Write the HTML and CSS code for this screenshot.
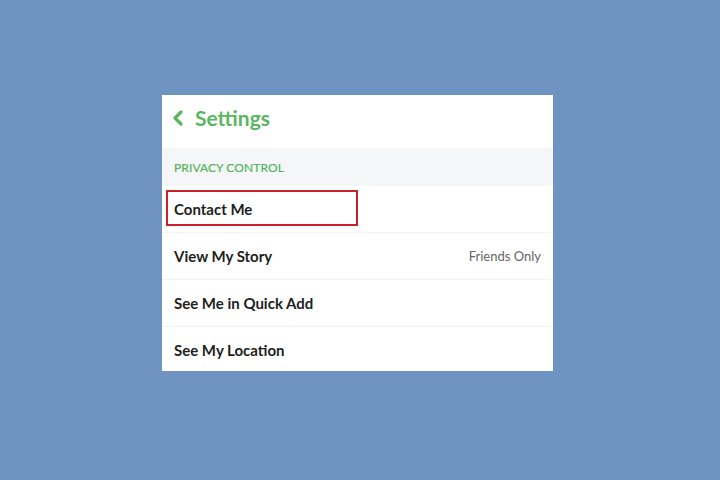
FILE: index.html
```html
<!DOCTYPE html>
<html>
<head>
    <title>Settings - Privacy Control</title>
    <meta name="viewport" content="width=device-width, initial-scale=1.0">
    <link rel="stylesheet" href="styles.css">
</head>
<body>
    <div class="panel">
        <header class="panel-header">
            <svg class="back" width="12" height="16" viewBox="0 0 12 16">
                <path d="M9 2 L3 8 L9 14" fill="none" stroke="#5bb662" stroke-width="3.2" stroke-linecap="round" stroke-linejoin="round"/>
            </svg>
            <h1>Settings</h1>
        </header>

        <div class="section-title">PRIVACY CONTROL</div>

        <ul class="rows">
            <li class="row highlight">Contact Me</li>
            <li class="row">View My Story <span class="value">Friends Only</span></li>
            <li class="row">See Me in Quick Add</li>
            <li class="row">See My Location</li>
        </ul>
    </div>
</body>
</html>
```

FILE: styles.css
```css
body {
    background-color: #7094c1; /* Blue backdrop */
    font-family: Lato, "Open Sans", sans-serif;
    margin: 0;
    padding: 95px 0 0 162px;
}

.panel {
    width: 391px;
    height: 276px;
    background-color: #ffffff;
    overflow: hidden;
}

.panel-header {
    height: 53px;
    display: flex;
    align-items: center;
    padding-left: 10px;
    padding-bottom: 8px;
    box-sizing: border-box;
    gap: 11px;
}

.back {
    margin-top: 1px;
}

.panel-header h1 {
    margin: 0;
    font-size: 21px;
    font-weight: 700;
    color: #5bb662; /* Green title */
}

.section-title {
    height: 38px;
    background-color: #f5f6f8;
    color: #56b45e;
    font-size: 12px;
    letter-spacing: 0.1px;
    -webkit-text-stroke: 0.2px #56b45e;
    display: flex;
    align-items: center;
    padding-left: 12px;
}

.rows {
    list-style: none;
    margin: 0;
    padding: 0;
}

.row {
    position: relative;
    height: 47px;
    box-sizing: border-box;
    display: flex;
    align-items: center;
    justify-content: space-between;
    padding: 0 12px 1px;
    font-size: 15px;
    font-weight: 700;
    color: #1e1e1e;
    border-bottom: 1px solid #f1f2f4;
}

.value {
    font-size: 13px;
    font-weight: 400;
    color: #666666;
}

/* Red marker box around the highlighted row */
.highlight::after {
    content: "";
    position: absolute;
    left: 4px;
    top: 4px;
    width: 188px;
    height: 32px;
    border: 2px solid #c9202c;
}
```
